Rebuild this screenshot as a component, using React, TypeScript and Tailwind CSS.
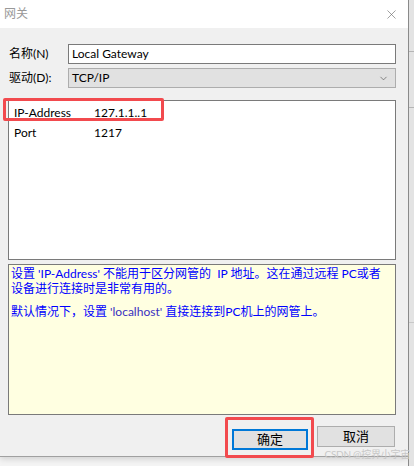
import { ChevronDown, X } from "lucide-react"

const font = { fontFamily: 'Lato, "Noto Sans CJK SC", sans-serif' }

const Row = ({ name, value }: { name: string; value: string }) => (
    <div className="grid grid-cols-[85px_1fr] h-[20px] items-center text-[12px] text-black">
        <span className="pl-[5px]">{name}</span>
        <span>{value}</span>
    </div>
)

const App = () => {
    return (
        <div className="relative flex w-[414px] h-[466px] bg-[#f4f4f4] overflow-hidden" style={font}>
            <div className="flex flex-col w-[408px] h-[457px] border-b border-[#a0a0a0] shadow-[0_2px_6px_rgba(0,0,0,0.15)]">
                {/* title bar */}
                <div className="flex items-center justify-between h-[28px] bg-white pl-[4px] pr-[9px]">
                    <span className="text-[12px] text-[#999]">网关</span>
                    <X size={15} strokeWidth={1} className="text-[#666]" />
                </div>

                <div className="flex flex-col flex-1 bg-[#f0f0f0] pl-[8px] pr-[12px] pt-[16px]">
                    <div className="flex items-center h-[20px]">
                        <span className="w-[60px] pl-[1px] text-[12px] text-black">名称(N)</span>
                        <div className="flex items-center flex-1 h-[20px] bg-white border border-[#7a7a7a] px-[3px] text-[12px] text-black">
                            Local Gateway
                        </div>
                    </div>
                    <div className="flex items-center h-[20px] mt-[4px]">
                        <span className="w-[60px] pl-[1px] text-[12px] text-black">驱动(D):</span>
                        <div className="flex items-center justify-between flex-1 h-[20px] bg-[#e1e1e1] border border-[#adadad] pl-[3px] pr-[6px] text-[12px] text-black">
                            TCP/IP
                            <ChevronDown size={11} strokeWidth={1.3} className="text-[#444]" />
                        </div>
                    </div>

                    {/* property list */}
                    <div className="relative mt-[12px] h-[160px] bg-white border border-[#7a7a7a] pt-[2px]">
                        <Row name="IP-Address" value="127.1.1..1" />
                        <Row name="Port" value="1217" />
                        <div className="absolute left-[-6px] top-[-3px] w-[161px] h-[23px] border-[3px] border-[#f24a4e] rounded-[2px]" />
                    </div>

                    {/* help text */}
                    <div className="mt-[4px] h-[151px] bg-[#ffffe1] border border-[#7a7a7a] pl-[2px] pr-[10px] pt-[1px] text-[12px] leading-[15px] text-[#0000ff]">
                        <p>
                            设置 'IP-Address' 不能用于区分网管的 &nbsp;IP 地址。这在通过远程 PC或者设备进行连接时是非常有用的。
                        </p>
                        <p className="mt-[8px]">
                            默认情况下，设置 <span className="text-[#3a2fc0]">'localhost'</span> 直接连接到PC机上的网管上。
                        </p>
                    </div>

                    <div className="flex justify-end gap-[9px] mt-[11px] pr-[1px]">
                        <div className="relative">
                            <button className="w-[76px] h-[21px] bg-[#e1e1e1] border-2 border-[#0078d7] text-[13px] text-black leading-none">
                                确定
                            </button>
                            <div className="absolute left-[-7px] top-[-9px] w-[89px] h-[41px] border-[3px] border-[#f24a4e] rounded-[2px]" />
                        </div>
                        <button className="w-[78px] h-[21px] bg-[#e1e1e1] border border-[#adadad] text-[13px] text-black leading-none">
                            取消
                        </button>
                    </div>
                </div>
            </div>

            {/* neighbouring window edge */}
            <div className="flex flex-col w-[6px] h-full border-l border-[#8a8a8a] bg-[#e3e3e3]">
                <div className="h-[52px] border-b border-[#b5b5b5]" />
                <div className="h-[56px] border-b border-[#b5b5b5]" />
                <div className="h-[215px] border-b border-[#c8c8c8]" />
            </div>

            <span className="absolute right-[4px] bottom-[4px] text-[10px] text-[#c8c8c8] tracking-tight">
                CSDN @控界小宇宙
            </span>
        </div>
    )
}

export default App
